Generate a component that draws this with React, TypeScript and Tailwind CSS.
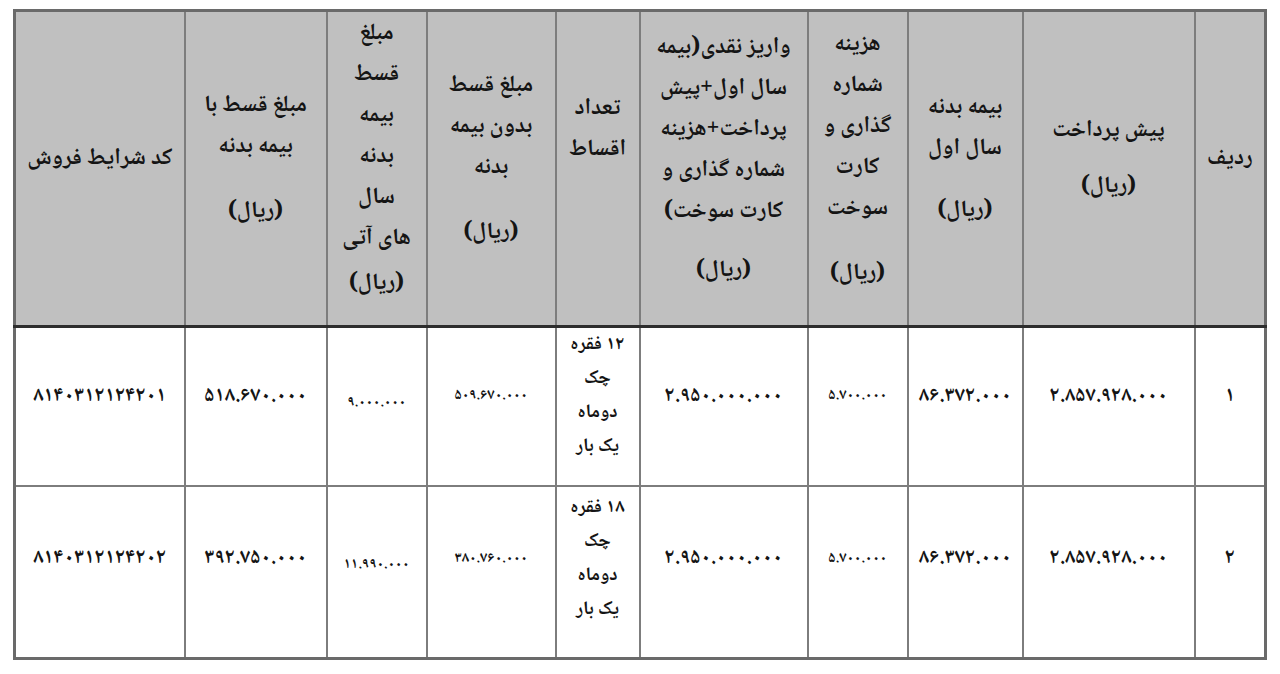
const FONT = "font-['Noto_Naskh_Arabic','Noto_Sans_Arabic','DejaVu_Sans',sans-serif]";

type Head = { lines: string[]; rial?: number; tail?: number; w: string };

const HEAD: Head[] = [
  { lines: ['ردیف'], w: 'w-[71px]' },
  { lines: ['پیش پرداخت'], rial: 15, w: 'w-[172px]' },
  { lines: ['بیمه بدنه', 'سال اول'], rial: 21, w: 'w-[115px]' },
  { lines: ['هزینه', 'شماره', 'گذاری و', 'کارت', 'سوخت'], rial: 24, w: 'w-[100px]' },
  {
    lines: ['واریز نقدی(بیمه', 'سال اول+پیش', 'پرداخت+هزینه', 'شماره گذاری و', 'کارت سوخت)'],
    rial: 18,
    w: 'w-[168px]',
  },
  { lines: ['تعداد', 'اقساط'], tail: 60, w: 'w-[84px]' },
  { lines: ['مبلغ قسط', 'بدون بیمه', 'بدنه'], rial: 24, w: 'w-[129px]' },
  { lines: ['مبلغ', 'قسط', 'بیمه', 'بدنه', 'سال', 'های آتی'], rial: 4, w: 'w-[100px]' },
  { lines: ['مبلغ قسط با', 'بیمه بدنه'], rial: 24, w: 'w-[142px]' },
  { lines: ['کد شرایط فروش'], w: 'w-[170px]' },
];

const ROWS = [
  {
    no: '۱',
    pre: '۲.۸۵۷.۹۲۸.۰۰۰',
    ins: '۸۶.۳۷۲.۰۰۰',
    fee: '۵.۷۰۰.۰۰۰',
    cash: '۲.۹۵۰.۰۰۰.۰۰۰',
    count: '۱۲ فقره',
    plain: '۵۰۹.۶۷۰.۰۰۰',
    future: '۹.۰۰۰.۰۰۰',
    withIns: '۵۱۸.۶۷۰.۰۰۰',
    code: '۸۱۴۰۳۱۲۱۲۴۲۰۱',
  },
  {
    no: '۲',
    pre: '۲.۸۵۷.۹۲۸.۰۰۰',
    ins: '۸۶.۳۷۲.۰۰۰',
    fee: '۵.۷۰۰.۰۰۰',
    cash: '۲.۹۵۰.۰۰۰.۰۰۰',
    count: '۱۸ فقره',
    plain: '۳۸۰.۷۶۰.۰۰۰',
    future: '۱۱.۹۹۰.۰۰۰',
    withIns: '۳۹۲.۷۵۰.۰۰۰',
    code: '۸۱۴۰۳۱۲۱۲۴۲۰۲',
  },
];

const cell = 'border-2 border-[#7d7d7d] px-0 text-center align-middle';

function Num({ v, small }: { v: string; small?: boolean }) {
  return (
    <span dir="ltr" className={small ? 'text-[15px]' : 'text-[21px]'}>
      {v}
    </span>
  );
}

export default function App() {
  return (
    <div className={`min-h-screen bg-white pl-[13px] pt-[9px] text-[#141414] ${FONT}`}>
      <table
        dir="rtl"
        className="w-[1251px] table-fixed border-collapse border-[3px] border-[#6a6a6a] font-bold"
      >
        <thead>
          <tr className="h-[316px] bg-[#c0c0c0]">
            {HEAD.map((h, i) => (
              <th
                key={i}
                className={`${cell} ${h.w} border-b-[3px] border-b-[#2e2e2e] pt-0 pb-[18px] text-[23px]`}
              >
                <div className="flex flex-col items-center">
                  {h.lines.map((l) => (
                    <div key={l} className="whitespace-nowrap leading-[41px]">
                      {l}
                    </div>
                  ))}
                  {h.rial !== undefined && (
                    <div className="whitespace-nowrap leading-[41px]" style={{ marginTop: h.rial }}>
                      (ریال)
                    </div>
                  )}
                  {h.tail && <div style={{ height: h.tail }} />}
                </div>
              </th>
            ))}
          </tr>
        </thead>
        <tbody>
          {ROWS.map((r, i) => {
            const first = i === 0;
            const td = `${cell} pt-0 ${first ? 'pb-[20px]' : 'pb-[26px]'}`;
            const low = `${cell} ${first ? 'pt-[14px] pb-[20px]' : 'pt-[12px] pb-[26px]'}`;
            return (
              <tr key={r.no} className={first ? 'h-[159px]' : 'h-[173px]'}>
                <td className={td}>
                  <Num v={r.no} />
                </td>
                <td className={td}>
                  <Num v={r.pre} />
                </td>
                <td className={td}>
                  <Num v={r.ins} />
                </td>
                <td className={td}>
                  <Num v={r.fee} small />
                </td>
                <td className={td}>
                  <Num v={r.cash} />
                </td>
                <td className={td}>
                  <div className="flex flex-col items-center text-[19px] leading-[34px]">
                    <div>{r.count}</div>
                    <div>چک</div>
                    <div>دوماه</div>
                    <div>یک بار</div>
                  </div>
                </td>
                <td className={td}>
                  <Num v={r.plain} small />
                </td>
                <td className={low}>
                  <Num v={r.future} small />
                </td>
                <td className={td}>
                  <Num v={r.withIns} />
                </td>
                <td className={td}>
                  <Num v={r.code} />
                </td>
              </tr>
            );
          })}
        </tbody>
      </table>
    </div>
  );
}
